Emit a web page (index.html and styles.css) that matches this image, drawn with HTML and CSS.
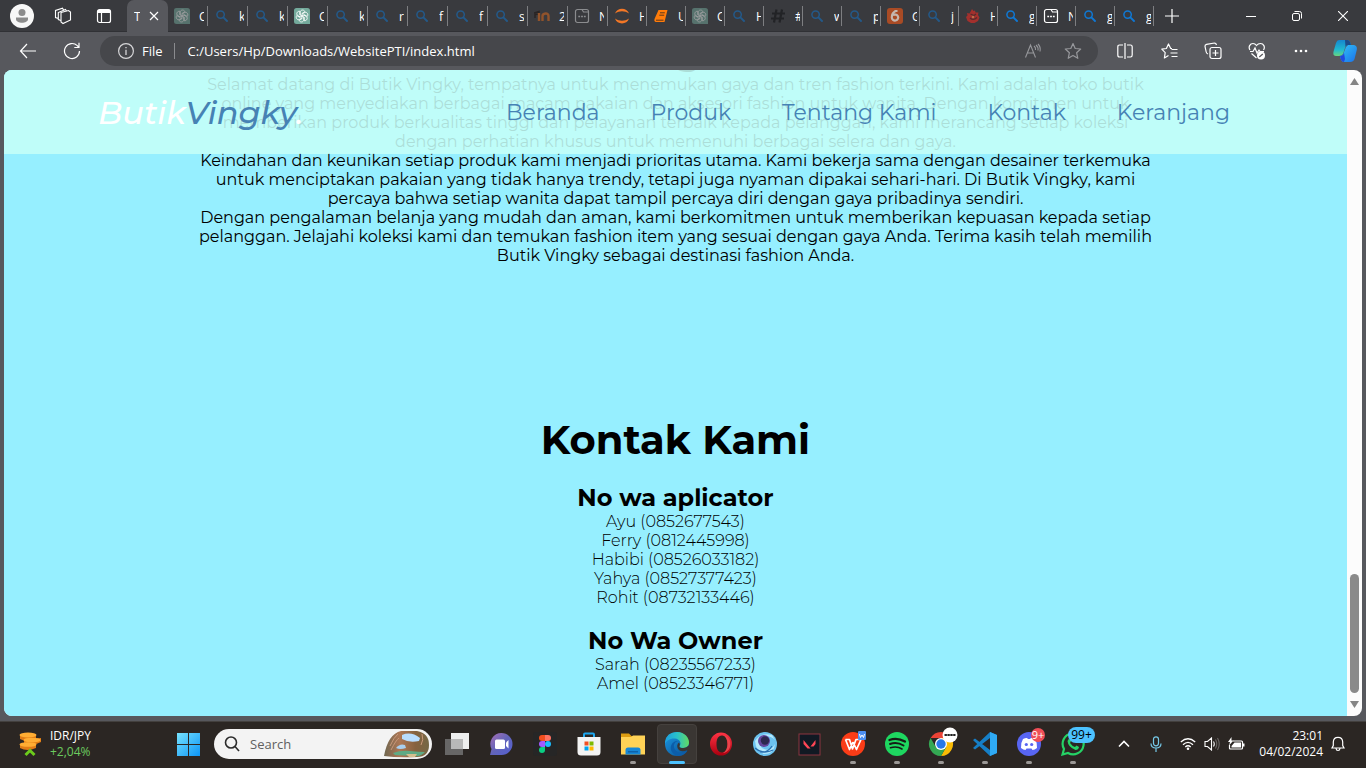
FILE: index.html
```html
<!DOCTYPE html>
<html lang="id">
<head>
<meta charset="utf-8">
<title>Toko Butik Vingky</title>
<link rel="stylesheet" href="styles.css">
</head>
<body>
<svg class="sprite" aria-hidden="true">
  <symbol id="mag" viewBox="0 0 16 16"><circle cx="6.600" cy="6.600" r="3.700" fill="none" stroke="currentColor" stroke-width="1.500"/><path d="M9.400 9.400L13 13" stroke="currentColor" stroke-width="1.900" stroke-linecap="round"/></symbol>
  <symbol id="gpt" viewBox="0 0 16 16"><path d="M2.500 0H13.500A2.500 2.500 0 0 1 16 2.500V16H2.500A2.500 2.500 0 0 1 0 13.500V2.500A2.500 2.500 0 0 1 2.500 0Z" fill="#74aa9c"/><g fill="none" stroke="#fff" stroke-width=".8"><path id="petal" d="M6.300 7V4.300C6.300 1.500 10 1.300 11 3.700L8 5.400V8"/><use href="#petal" transform="rotate(60 8 8)"/><use href="#petal" transform="rotate(120 8 8)"/><use href="#petal" transform="rotate(180 8 8)"/><use href="#petal" transform="rotate(240 8 8)"/><use href="#petal" transform="rotate(300 8 8)"/></g></symbol>
  <symbol id="win" viewBox="0 0 16 16"><path d="M3.500 1.500H8L9.500 4H14.500V12.500A2 2 0 0 1 12.500 14.500H3.500A2 2 0 0 1 1.500 12.500V3.500A2 2 0 0 1 3.500 1.500ZM8 1.500H12.500A2 2 0 0 1 14.500 3.500V4.500" fill="none" stroke="currentColor" stroke-width="1.200"/><path d="M4.300 8.500h1.800M7.100 8.500h1.800M9.900 8.500h1.800" stroke="currentColor" stroke-width="1.700"/></symbol>
</svg>

<header class="titlebar">
  <button class="tool" aria-label="Profil"><svg width="24" height="24" viewBox="0 0 24 24"><circle cx="12" cy="12" r="12" fill="#f7f7f7"/><circle cx="12" cy="8.500" r="3.500" fill="#8b8b8b"/><path d="M6 13.500h12v1.500c0 5-12 5-12 0z" fill="#8b8b8b"/></svg></button>
  <button class="tool" aria-label="Ruang kerja"><svg width="18" height="18" viewBox="0 0 18 18" fill="none" stroke="#fff" stroke-width="1.100"><path d="M7 5.500L14.500 3.500 16.500 5V13L9 16.500 7 15z"/><path d="M7 13.500L4.300 12.500V5.500L11.500 2.500 12.500 4M4.300 11.500L1.500 10.500V3.500L8.500 1.200 9.500 3"/></svg></button>
  <button class="tool" aria-label="Menu tab"><svg width="16" height="16" viewBox="0 0 16 16" fill="none" stroke="#fff" stroke-width="1.200"><rect x="1.500" y="1.500" width="13" height="13" rx="2"/><path d="M5.500 4.500V14"/><path d="M2 3.500h12" stroke-width="3"/></svg></button>
  <nav class="tabs" aria-label="Tab">
    <div class="tab active"><span class="name">T</span><button class="close" aria-label="Tutup tab"><svg width="10" height="10" viewBox="0 0 10 10"><path d="M1 1L9 9M9 1L1 9" stroke="#fff" stroke-width="1.200"/></svg></button></div>
    <div class="tab dim"><svg><use href="#gpt"/></svg><span class="name">C</span></div>
    <div class="tab dim"><svg><use href="#mag"/></svg><span class="name">k</span></div>
    <div class="tab dim"><svg><use href="#mag"/></svg><span class="name">k</span></div>
    <div class="tab"><svg><use href="#gpt"/></svg><span class="name">C</span></div>
    <div class="tab dim"><svg><use href="#mag"/></svg><span class="name">k</span></div>
    <div class="tab dim"><svg><use href="#mag"/></svg><span class="name">r</span></div>
    <div class="tab dim"><svg><use href="#mag"/></svg><span class="name">f</span></div>
    <div class="tab dim"><svg><use href="#mag"/></svg><span class="name">f</span></div>
    <div class="tab dim"><svg><use href="#mag"/></svg><span class="name">s</span></div>
    <div class="tab"><svg viewBox="0 0 16 16"><path d="M0 5L5 3.500V6L1 6.500V10" fill="none" stroke="#292424" stroke-width="1.500"/><path d="M5 5V13M8.500 13V8C8.500 5.500 14.500 4 14.500 8V13" fill="none" stroke="#91532b" stroke-width="2.400"/></svg><span class="name">2</span></div>
    <div class="tab faded"><svg><use href="#win"/></svg><span class="name">N</span></div>
    <div class="tab slim"><svg viewBox="0 0 16 16"><path d="M1 5.500C3-1 13-1 15 5.500 10.500 2.500 5.500 2.500 1 5.500ZM1 10.500C3 17 13 17 15 10.500 10.500 13.500 5.500 13.500 1 10.500Z" fill="#f37726"/></svg><span class="name">H</span></div>
    <div class="tab slim"><svg viewBox="0 0 16 16"><path d="M5.500 2H14.500L11.500 14H3Q.8 13.500 1.500 11Z" fill="#ff7c0a"/><path d="M7 4.800H11.800M6.300 7.200H11.200M3 12.200H10.500" fill="none" stroke="#4a3020" stroke-width=".9"/></svg><span class="name">U</span></div>
    <div class="tab slim dim"><svg><use href="#gpt"/></svg><span class="name">C</span></div>
    <div class="tab slim dim"><svg><use href="#mag"/></svg><span class="name">H</span></div>
    <div class="tab slim"><svg viewBox="0 0 16 16"><path d="M6.500 1.500L4 14.500M12 1.500L9.500 14.500M2 5.500H15M1 10.500H14" stroke="#222326" stroke-width="2.200"/></svg><span class="name">#</span></div>
    <div class="tab slim dim"><svg><use href="#mag"/></svg><span class="name">w</span></div>
    <div class="tab slim dim"><svg><use href="#mag"/></svg><span class="name">p</span></div>
    <div class="tab slim"><svg viewBox="0 0 16 16"><rect width="16" height="16" rx="3" fill="#a94b25"/><path d="M10.500 3H8.500C5 5 4.800 7.500 4.800 9.500A3.200 3 0 1 0 6 7.200" fill="none" stroke="#c4b7b0" stroke-width="2.200"/></svg><span class="name">G</span></div>
    <div class="tab slim dim"><svg><use href="#mag"/></svg><span class="name">j</span></div>
    <div class="tab slim"><svg viewBox="0 0 16 16"><path d="M7 1L8.500 3 10 2.500 10.500 4.500 13.500 4.500 13 7 14.500 9.500 13 13 9.500 15H6L2.500 13 1 9 2.500 7.500 2 5 4.500 5.500Z" fill="#a3302d"/><path d="M5.500 6L9 7.500 11 6M5 10Q8.500 13 12 9.500" fill="none" stroke="#542c2d" stroke-width="1.200"/><circle cx="8" cy="9" r="1.200" fill="#bd704b"/></svg><span class="name">H</span></div>
    <div class="tab slim"><svg><use href="#mag"/></svg><span class="name">g</span></div>
    <div class="tab slim white"><svg><use href="#win"/></svg><span class="name">N</span></div>
    <div class="tab slim"><svg><use href="#mag"/></svg><span class="name">g</span></div>
    <div class="tab slim"><svg><use href="#mag"/></svg><span class="name">g</span></div>
    <button class="newtab" aria-label="Tab baru"><svg width="14" height="14" viewBox="0 0 14 14"><path d="M7 0V14M0 7H14" stroke="#fff" stroke-width="1.200"/></svg></button>
  </nav>
  <div class="controls">
    <button aria-label="Kecilkan"><svg width="10" height="10" viewBox="0 0 10 10"><path d="M0 5.500H10" stroke="#fff"/></svg></button>
    <button aria-label="Pulihkan"><svg width="10" height="10" viewBox="0 0 10 10" fill="none" stroke="#fff"><rect x=".5" y="2.500" width="7" height="7" rx="1.500"/><path d="M2.500 .5H7.500Q9.500 .5 9.500 2.500V7.500"/></svg></button>
    <button aria-label="Tutup"><svg width="10" height="10" viewBox="0 0 10 10"><path d="M0 0L10 10M10 0L0 10" stroke="#fff" stroke-width="1.100"/></svg></button>
  </div>
</header>

<div class="toolbar">
  <button class="nav-btn" aria-label="Kembali"><svg width="18" height="16" viewBox="0 0 18 16" fill="none" stroke="#fff" stroke-width="1.200"><path d="M17 8H1.500M8 1L1.500 8 8 15"/></svg></button>
  <button class="nav-btn" aria-label="Muat ulang"><svg width="18" height="18" viewBox="0 0 18 18" fill="none" stroke="#fff" stroke-width="1.200"><path d="M16.500 9A7.500 7.500 0 1 1 14.300 3.700L15.500 5M16 .8V5.500H11.300"/></svg></button>
  <div class="address">
    <svg width="18" height="18" viewBox="0 0 18 18"><circle cx="9" cy="9" r="7.400" fill="none" stroke="#d6d6d8" stroke-width="1.200"/><path d="M9 7.700V13M9 5V6.300" stroke="#d6d6d8" stroke-width="1.300"/></svg>
    <label for="url">File</label>
    <input id="url" type="text" value="C:/Users/Hp/Downloads/WebsitePTI/index.html">
    <button aria-label="Baca keras"><svg width="18" height="16" viewBox="0 0 18 16" fill="none" stroke="#96979b" stroke-width="1.100"><path d="M1.500 14.500L6.500 2 11.500 14.500M3.300 10H9.700M10 3Q12 4.500 11.500 7M12 2Q14.500 4 14 7.500M14 1Q17 4 16 8.500"/></svg></button>
    <button aria-label="Favorit"><svg width="18" height="18" viewBox="0 0 18 18" fill="none" stroke="#96979b" stroke-width="1.200" stroke-linejoin="round"><path d="M9 1.500L11.200 6.500 16.700 7 12.600 10.700 13.800 16.300 9 13.400 4.200 16.300 5.400 10.700 1.300 7 6.800 6.500Z"/></svg></button>
  </div>
  <div class="actions">
    <button aria-label="Layar terpisah"><svg width="16" height="16" viewBox="0 0 16 16" fill="none" stroke="#fff" stroke-width="1.200"><path d="M8 0V16M6 2H2.500Q.8 2 .8 4V12Q.8 14 2.500 14H6M10 2H13.500Q15.200 2 15.200 4V12Q15.200 14 13.500 14H10"/></svg></button>
    <button aria-label="Daftar favorit"><svg width="17" height="17" viewBox="0 0 17 17" fill="none" stroke="#fff" stroke-width="1.200" stroke-linejoin="round"><path d="M11 5.500H9.700L7.500 1 5.400 5.500 .8 6.200 4.200 9.600 3.400 15 7.500 12.600M10.500 6.500H16.500M9.500 10H16.500M10.500 13.500H16.500"/></svg></button>
    <button aria-label="Koleksi"><svg width="18" height="18" viewBox="0 0 18 18" fill="none" stroke="#fff" stroke-width="1.200"><rect x="6" y="5.500" width="11" height="11" rx="2"/><path d="M11.500 8V14M8.500 11H14.500M4 12Q2.500 11.500 2.200 10L1 4.500Q.8 2.700 2.500 2.300L10.500 1Q12 1 12.500 3"/></svg></button>
    <button aria-label="Kinerja browser"><svg width="18" height="18" viewBox="0 0 18 18" fill="none" stroke="#fff" stroke-width="1.200"><path d="M2 8C0 5 2 1.500 5 1.500 7 1.500 8.500 3.500 8.500 3.500S10 1.500 12.500 1.500C15.500 1.500 17.500 5 15.500 8M2 9.500H5L7 6 9 11 11 8 12 9.500H16M3.500 11.500L8.500 16"/><circle cx="13" cy="13.500" r="4" fill="#fff" stroke="none"/><path d="M11.300 15L14.800 12" stroke="#55565a"/></svg></button>
    <button aria-label="Lainnya"><svg width="14" height="4" viewBox="0 0 14 4"><g fill="#fff"><circle cx="2" cy="2" r="1.300"/><circle cx="7" cy="2" r="1.300"/><circle cx="12" cy="2" r="1.300"/></g></svg></button>
    <button aria-label="Copilot"><svg width="24" height="24" viewBox="0 0 24 24"><defs><linearGradient id="cpa" x2="0" y2="1"><stop stop-color="#1686ce"/><stop offset=".6" stop-color="#20b8cf"/><stop offset="1" stop-color="#67d680"/></linearGradient><linearGradient id="cpb" x2="1" y2="1"><stop stop-color="#32c4f5"/><stop offset="1" stop-color="#1b71eb"/></linearGradient></defs><path d="M6 1H14Q17 1 18 6H15Q13 6 12 9L10 15Q9 17 6 17H3Q-1 17 1 11L3 4Q4 1 6 1Z" fill="url(#cpa)"/><path d="M15 6H21Q25 7 23.500 12L21.500 20Q20.500 23 17 23H11Q8 23 7 17Q10 17 11 13L13 8Z" fill="url(#cpb)"/><path d="M12 1H14Q17 1 18 6H15Q13.500 6 12.500 8Z" fill="#1e4b88"/><path d="M7 17Q10 17 11 14L12 20 11 23Q8 23 7 17Z" fill="#2249dd"/></svg></button>
  </div>
</div>

<div class="frame">
  <main class="page">
    <nav class="site-nav">
      <a class="logo" href="#beranda">Butik<span>Vingky</span>.</a>
      <div class="links">
        <a href="#beranda">Beranda</a>
        <a href="#produk">Produk</a>
        <a href="#tentang">Tentang Kami</a>
        <a href="#kontak">Kontak</a>
        <a href="#keranjang">Keranjang</a>
      </div>
    </nav>
    <div class="content">
      <section id="tentang" class="about">
        <h2>Tentang Kami</h2>
        <p>Selamat datang di Butik Vingky, tempatnya untuk menemukan gaya dan tren fashion terkini. Kami adalah toko butik<br>online yang menyediakan berbagai macam pakaian dan aksesori fashion untuk wanita. Dengan komitmen untuk<br>memberikan produk berkualitas tinggi dan pelayanan terbaik kepada pelanggan, kami merancang setiap koleksi<br>dengan perhatian khusus untuk memenuhi berbagai selera dan gaya.</p>
        <p>Keindahan dan keunikan setiap produk kami menjadi prioritas utama. Kami bekerja sama dengan desainer terkemuka<br>untuk menciptakan pakaian yang tidak hanya trendy, tetapi juga nyaman dipakai sehari-hari. Di Butik Vingky, kami<br>percaya bahwa setiap wanita dapat tampil percaya diri dengan gaya pribadinya sendiri.</p>
        <p>Dengan pengalaman belanja yang mudah dan aman, kami berkomitmen untuk memberikan kepuasan kepada setiap<br>pelanggan. Jelajahi koleksi kami dan temukan fashion item yang sesuai dengan gaya Anda. Terima kasih telah memilih<br>Butik Vingky sebagai destinasi fashion Anda.</p>
      </section>
      <section id="kontak" class="contact">
        <h2>Kontak Kami</h2>
        <h3>No wa aplicator</h3>
        <ul>
          <li>Ayu (0852677543)</li>
          <li>Ferry (0812445998)</li>
          <li>Habibi (08526033182)</li>
          <li>Yahya (08527377423)</li>
          <li>Rohit (08732133446)</li>
        </ul>
        <h3>No Wa Owner</h3>
        <ul>
          <li>Sarah (08235567233)</li>
          <li>Amel (08523346771)</li>
        </ul>
      </section>
    </div>
  </main>
  <div class="scrollbar">
    <svg width="9" height="7" viewBox="0 0 9 7"><path d="M4.500 0L9 7H0Z" fill="#858585"/></svg>
    <div class="track"><div class="thumb"></div></div>
    <svg width="9" height="7" viewBox="0 0 9 7"><path d="M4.500 7L9 0H0Z" fill="#858585"/></svg>
  </div>
</div>

<footer class="taskbar">
  <button class="widget">
    <svg width="24" height="26" viewBox="0 0 24 26"><g fill="#e07c16"><path d="M2 4V8Q9 12 18 8V4ZM6 9V13Q14 16 23 11V7ZM2 14V17Q9 21 18 17V12Z"/></g><g fill="#ffad33"><ellipse cx="10" cy="4" rx="8.500" ry="2.500"/><ellipse cx="14" cy="9" rx="8.500" ry="2.300"/><ellipse cx="10" cy="13.500" rx="8.500" ry="2.300"/></g><path d="M7.500 24L12 19.500 16.500 24" fill="none" stroke="#6ccb1c" stroke-width="3"/></svg>
    <span class="rate"><span>IDR/JPY</span><span class="up">+2,04%</span></span>
  </button>
  <button class="app start" aria-label="Mulai"><svg width="24" height="24" viewBox="0 0 24 24"><defs><linearGradient id="wg" gradientUnits="userSpaceOnUse" x2="24" y2="24"><stop stop-color="#7be6ff"/><stop offset="1" stop-color="#0c94f5"/></linearGradient></defs><path d="M1 1H12V12H1ZM13 1H24V12H13ZM1 13H12V24H1ZM13 13H24V24H13Z" fill="url(#wg)"/></svg></button>
  <div class="search">
    <svg width="16" height="16" viewBox="0 0 16 16" fill="none" stroke="#2b2b2b" stroke-width="1.600"><circle cx="7" cy="6.500" r="5.500"/><path d="M11 10.500L15 15"/></svg>
    <input type="search" placeholder="Search" aria-label="Search">
    <svg width="47" height="28" viewBox="0 0 47 28"><defs><linearGradient id="rk"><stop stop-color="#6e6650"/><stop offset=".35" stop-color="#ad7755"/><stop offset=".7" stop-color="#86623f"/><stop offset="1" stop-color="#746845"/></linearGradient></defs><path d="M1 26Q5 4 18 1H34Q46 3 46 15T34 27Q15 28 1 26Z" fill="url(#rk)"/><path d="M19 5Q28 1 37 8L36 11Q26 13 19 9Z" fill="#b8ddff"/><path d="M13 18Q17 13 22 15L23 18Q17 20 13 18Z" fill="#a9cfee"/><path d="M10 23Q18 20 27 21T42 22Q38 27 31 26L12 25Z" fill="#5faa85"/><path d="M23 24H34L32 27H26Z" fill="#d4be8e"/><path d="M7 16Q11 7 15 4M38 15Q41 10 39 4M8 20Q13 10 16 8" fill="none" stroke="#c9987a" stroke-width="1"/></svg>
  </div>
  <div class="apps">
    <button class="app" aria-label="Tampilan tugas"><svg width="24" height="24" viewBox="0 0 24 24"><path d="M6 1H24V17H6Z" fill="#eee"/><path d="M0 7H18V23H0Z" fill="#777" opacity=".8"/><path d="M6 7H18V17H6Z" fill="#b8b8b8"/></svg></button>
    <button class="app" aria-label="Chat"><svg width="24" height="24" viewBox="0 0 24 24"><defs><linearGradient id="ch" x2="1" y2="1"><stop stop-color="#a76fb5"/><stop offset=".5" stop-color="#6264b9"/><stop offset="1" stop-color="#5360d5"/></linearGradient></defs><path d="M12.500 1A11 11 0 1 1 12.500 23H1L2.500 17A11 11 0 0 1 12.500 1Z" fill="url(#ch)"/><rect x="6" y="7.500" width="10" height="9.500" rx="1.500" fill="#fff"/><path d="M17 10.500L19.500 8V16.500L17 14Z" fill="#fff"/></svg></button>
    <button class="app" aria-label="Figma"><svg width="24" height="24" viewBox="0 0 24 24"><rect width="24" height="24" rx="3" fill="#262626"/><path d="M12 3H9A3 3 0 0 0 9 9H12Z" fill="#f24e1e"/><path d="M12 3H15A3 3 0 0 1 15 9H12Z" fill="#ff7262"/><path d="M12 9H9A3 3 0 0 0 9 15H12Z" fill="#a259ff"/><circle cx="15" cy="12" r="3" fill="#1abcfe"/><path d="M12 15H9A3 3 0 1 0 12 18Z" fill="#0acf83"/></svg></button>
    <button class="app" aria-label="Microsoft Store"><svg width="24" height="24" viewBox="0 0 24 24"><path d="M7 7V2.500Q7 1.500 8 1.500H16Q17 1.500 17 2.500V7" fill="none" stroke="#1ea7ef" stroke-width="2"/><path d="M.5 5H23.500V20Q23.500 23.500 20 23.500H4Q.5 23.500 .5 20Z" fill="#f3f3f3"/><path d="M7.500 9.500H11.500V13.500H7.500Z" fill="#f25022"/><path d="M12.500 9.500H16.500V13.500H12.500Z" fill="#7fba00"/><path d="M7.500 14.500H11.500V18.500H7.500Z" fill="#00a4ef"/><path d="M12.500 14.500H16.500V18.500H12.500Z" fill="#ffb900"/></svg></button>
    <button class="app running" aria-label="File Explorer"><svg width="24" height="24" viewBox="0 0 24 24"><path d="M0 1.500H8L10.500 4H20V10H0Z" fill="#dd9d12"/><path d="M0 5H10L12 3.500H24V22.500H0Z" fill="#ffd256"/><path d="M4.500 22.500V18Q4.500 15.500 7 15.500H17Q19.500 15.500 19.500 18V22.500Z" fill="#1687d6"/><path d="M7 19H17V20.500H7Z" fill="#0d61a8"/></svg></button>
    <button class="app current" aria-label="Microsoft Edge"><svg width="24" height="24" viewBox="0 0 24 24"><defs><linearGradient id="ea"><stop stop-color="#1d9ee0"/><stop offset=".5" stop-color="#29c1c8"/><stop offset="1" stop-color="#62db62"/></linearGradient><linearGradient id="eb" x2="1" y2="1"><stop stop-color="#1c9ae5"/><stop offset="1" stop-color="#084d91"/></linearGradient></defs><circle cx="12" cy="12" r="12" fill="url(#eb)"/><path d="M0 10Q1.500 0 12 0C20 0 24 6 24 10.500 24 14.500 21 16 18 16 15 16 14 15 14.500 14 17 11 14.500 7 10 6.500 5 6 1 9 0 12Z" fill="url(#ea)"/><path d="M13 9C8 10 7 17 13 20 17 22 20 20 22.500 18.500 20 23 16 24 13 24 7 22 5 18 6 14 7 11 9 9 13 9Z" fill="#0c5da9"/><path d="M14.500 14Q14 16 18 16 21 16 24 13.500V18H22.500Q16 21 13 17 11 13 14 10.500 15.500 12 14.500 14Z" fill="#3a3633"/></svg></button>
    <button class="app" aria-label="Opera"><svg width="24" height="24" viewBox="0 0 24 24"><defs><linearGradient id="op" x2="0" y2="1"><stop stop-color="#ff3344"/><stop offset="1" stop-color="#a9000f"/></linearGradient></defs><path fill-rule="evenodd" d="M12 .5A11 11.500 0 1 0 12 23.500A11 11.500 0 1 0 12 .5ZM13 3.500C17 3.500 18.500 7.500 18.500 12S17 20.500 13 20.500 7.500 16.500 7.500 12 9 3.500 13 3.500Z" fill="url(#op)"/><path d="M14 3C24 4 24 20 14 21C20 18 20 6 14 3Z" fill="#e9424a"/></svg></button>
    <button class="app" aria-label="Gaming"><svg width="24" height="24" viewBox="0 0 24 24"><circle cx="12" cy="12" r="12" fill="#6cc3f0"/><path d="M2 9Q8 0 19 3L22 8Q17 2 9 6 3 10 9 16 17 21 22 12 21 22 11 22 3 20 2 9Z" fill="#b5e9fc"/><circle cx="11" cy="9" r="6" fill="#64479d"/><circle cx="12" cy="8.500" r="4.200" fill="#2d2950"/><path d="M2 16Q10 23 20 18M7 20Q15 21 19 14" fill="none" stroke="#276eb0" stroke-width="1.200"/></svg></button>
    <button class="app" aria-label="Valorant"><svg width="24" height="24" viewBox="0 0 24 24"><rect x="2" y="2" width="21" height="21" fill="#111923" stroke="#8b3440"/><path d="M6.500 8L13.500 16.500H10.500L6.500 12ZM18.500 8V12L16.500 14.500H13.500Z" fill="#ff4655"/></svg></button>
    <button class="app running" aria-label="WPS Office"><svg width="26" height="26" viewBox="0 0 26 26"><circle cx="13" cy="13" r="12" fill="#fa3c17"/><path d="M5.500 8.500H9.500L12.500 18 16 8.500H21L16.500 18.500 13 11M5.500 8.500L9.500 18.500 13 11" fill="none" stroke="#fff" stroke-width="1.700" stroke-linejoin="round"/><rect x="18" y="0" width="8" height="9" rx="1" fill="#4d8ff1"/><path d="M19.500 3L20.500 6.500 22 4 23.500 6.500 24.500 3" fill="none" stroke="#fff"/></svg></button>
    <button class="app running" aria-label="Spotify"><svg width="24" height="24" viewBox="0 0 24 24"><circle cx="12" cy="12" r="12" fill="#1ed760"/><g fill="none" stroke="#161b16" stroke-linecap="round"><path d="M4.500 8Q12 5 20 9.500" stroke-width="2.300"/><path d="M5 12Q12 9.500 18.500 13.500" stroke-width="2"/><path d="M5.500 15.700Q12 13.700 17 17" stroke-width="1.600"/></g></svg></button>
    <button class="app running" aria-label="Chrome"><svg width="34" height="34" viewBox="0 0 34 34"><path d="M6.600 11A12 12 0 0 1 27.400 11H17Z" fill="#ea4335"/><path d="M27.400 11A12 12 0 0 1 17 29L22.200 20 17 11Z" fill="#fbbc05"/><path d="M17 29A12 12 0 0 1 6.600 11L11.800 20H22.200Z" fill="#34a853"/><circle cx="17" cy="17" r="6" fill="#fff"/><circle cx="17" cy="17" r="4.700" fill="#2878e8"/><circle cx="26" cy="8" r="7.500" fill="#fff"/><path d="M20.500 8H31.500" stroke="#222" stroke-width="2" stroke-dasharray="2.400 .5"/></svg></button>
    <button class="app running" aria-label="Visual Studio Code"><svg width="24" height="24" viewBox="0 0 24 24"><path d="M17 0L24 3V21L17 24 1.500 9.500 0 8 2 6.500 17 18V6L2 17.500 0 16 17 0Z" fill="#167fc7"/><path d="M17 0L24 3V21L17 24Z" fill="#2faaf4"/></svg></button>
    <button class="app running" aria-label="Discord"><svg width="24" height="24" viewBox="0 0 24 24"><circle cx="12" cy="12" r="12" fill="#5865f2"/><path d="M6 7Q9 5.500 10 6L11 7H13L14 6Q15 5.500 18 7 20.500 11 20 16 17.500 18 15.500 18L14.500 16.500H9.500L8.500 18Q6.500 18 4 16 3.500 11 6 7Z" fill="#fff"/><circle cx="9.300" cy="12.500" r="1.600" fill="#5865f2"/><circle cx="14.700" cy="12.500" r="1.600" fill="#5865f2"/></svg><span class="badge red">9+</span></button>
    <button class="app running" aria-label="WhatsApp"><svg width="24" height="24" viewBox="0 0 24 24"><path d="M1.500 22.500L3 17A10.500 10.500 0 1 1 7 21Z" fill="none" stroke="#25d366" stroke-width="2.200"/><path d="M8 6.500L10 9 9 11Q11 14 14 15L15.500 13.500 18 15Q17.500 18 14.500 18 7 15 6.500 9Z" fill="#25d366"/></svg><span class="badge blue">99+</span></button>
  </div>
  <div class="tray">
    <button class="wide" aria-label="Ikon tersembunyi"><svg width="12" height="8" viewBox="0 0 12 8"><path d="M1 6.500L6 1.500 11 6.500" fill="none" stroke="#fff" stroke-width="1.600"/></svg></button>
    <button class="wide mic" aria-label="Mikrofon"><svg width="12" height="16" viewBox="0 0 12 16" fill="none" stroke="#76c9e8" stroke-width="1.200"><rect x="3.500" y=".8" width="5" height="9" rx="2.500"/><path d="M1 7.500Q1 12 6 12T11 7.500M6 12V16"/></svg></button>
    <button aria-label="Jaringan"><svg width="16" height="14" viewBox="0 0 16 14" fill="none" stroke="#fff" stroke-width="1.300"><path d="M.8 5Q8-1.500 15.200 5M3 7.700Q8 3 13 7.700M5.300 10Q8 7.500 10.700 10"/><circle cx="8" cy="11.800" r="1.300" fill="#fff" stroke="none"/></svg></button>
    <button aria-label="Volume"><svg width="16" height="14" viewBox="0 0 16 14" fill="none" stroke="#fff" stroke-width="1.100"><path d="M1 4.500H3.500L7.500 1V13L3.500 9.500H1ZM9.500 4.500Q11 7 9.500 9.500"/><path d="M11.500 2.500Q14 7 11.500 11.500M13.500 1Q17 7 13.500 13" stroke="#6b6866"/></svg></button>
    <button aria-label="Baterai"><svg width="17" height="14" viewBox="0 0 17 14"><path d="M5 4H13.500Q14.500 4 14.500 5V11Q14.500 12 13.500 12H2.500Q1.500 12 1.500 11V8" fill="none" stroke="#fff" stroke-width="1.200"/><path d="M6.500 5.500H13V10.500H3.500V9ZM15 6.500H16.500V9.500H15ZM3.500 0L0 5H2L1 8.500 5.500 3.500H3.500Z" fill="#fff"/></svg></button>
    <button class="clock"><span>23:01</span><span>04/02/2024</span></button>
    <button aria-label="Notifikasi"><svg width="14" height="16" viewBox="0 0 14 16" fill="none" stroke="#fff" stroke-width="1.200"><path d="M1 12H13L11.700 9.500V6Q11.500 1.300 7 1.300T2.300 6V9.500ZM5 12.500Q5.300 14.500 7 14.500T9 12.500"/></svg></button>
  </div>
</footer>
</body>
</html>
```
FILE: styles.css
```css
* { box-sizing: border-box; }

body {
  margin: 0;
  height: 100vh;
  display: flex;
  flex-direction: column;
  overflow: hidden;
  background: #57585d;
  color: #fff;
  font-family: "Open Sans", "Noto Sans", sans-serif;
  font-size: 12px;
}

button {
  display: flex;
  align-items: center;
  justify-content: center;
  padding: 0;
  border: 0;
  background: none;
  color: inherit;
  font: inherit;
}

svg { flex: none; display: block; }
a { color: inherit; text-decoration: none; }
input { min-width: 0; border: 0; outline: 0; padding: 0; background: none; font: inherit; color: inherit; }
.sprite { position: absolute; width: 0; height: 0; }

/* Browser title bar */
.titlebar {
  flex: none;
  display: flex;
  height: 32px;
  padding-left: 1px;
  background: #393a3e;
  box-shadow: inset 0 -1px #303135;
}
.tool { flex: none; width: 41px; }
.tabs { flex: 1; min-width: 0; display: flex; padding-left: 3px; overflow: hidden; }
.tab {
  flex: none;
  display: flex;
  align-items: center;
  gap: 9px;
  width: 40px;
  padding-left: 6px;
  background: linear-gradient(#7d7e81, #7d7e81) right center / 1px 20px no-repeat;
  color: #0f78d4;
}
.tab svg { width: 16px; height: 16px; }
.tab.slim { width: 39px; }
.tab.dim svg { opacity: .5; }
.tab.faded { color: #8b8c8f; }
.tab.white { color: #fff; }
.tab .name { width: 5px; overflow: hidden; color: #fff; white-space: nowrap; }
.tab.active {
  width: 41px;
  padding-left: 7px;
  border-radius: 7px 7px 0 0;
  background: #57585d;
}
.tab.active .name { width: 6px; }
.tab.active .close svg { width: 10px; height: 10px; }
.newtab { width: 36px; }
.controls { flex: none; display: flex; }
.controls button { width: 46px; }

/* Address row */
.toolbar { flex: none; display: flex; align-items: center; height: 38px; padding-left: 8px; }
.nav-btn { width: 40px; height: 30px; margin-right: 4px; }
.address {
  flex: 1;
  display: flex;
  align-items: center;
  height: 30px;
  margin: 0 5px 0 4px;
  padding: 0 5px 0 17px;
  border-radius: 15px;
  background: #46474b;
  font-size: 13px;
}
.address label { margin-left: 7px; padding-right: 11px; border-right: 1px solid #8a8b8e; line-height: 16px; }
.address input { flex: 1; padding-left: 13px; }
.address button { width: 40px; height: 30px; }
.actions { display: flex; margin-right: -1px; }
.actions button { width: 44px; height: 30px; }

/* Page viewport */
.frame {
  flex: 1;
  min-height: 0;
  display: flex;
  margin: 0 4px 5px;
  border-radius: 8px;
  overflow: hidden;
  background: #fcfcfc;
}
.page {
  position: relative;
  flex: 1;
  min-width: 0;
  display: flex;
  flex-direction: column;
  justify-content: flex-end;
  overflow: hidden;
  background: #96efff;
  color: #000;
  font-family: Montserrat, Inter, "Noto Sans", sans-serif;
}
.site-nav {
  position: absolute;
  inset: 0 0 auto;
  z-index: 1;
  display: flex;
  align-items: center;
  justify-content: space-between;
  height: 84px;
  padding: 0 117px 0 94px;
  background: rgba(197, 255, 248, .87);
  color: #4682b4;
}
.logo { color: #fff; font-size: 32px; font-style: italic; font-weight: 500; }
.logo span { color: #4682b4; }
.links { display: flex; gap: 51px; font-size: 22px; }
.content { flex: none; padding-bottom: 23px; text-align: center; font-size: 16px; font-weight: 400; line-height: 19px; }
.content p { margin: 0; white-space: nowrap; }
.content h2 { margin: 0 0 18px; font-size: 40px; font-weight: 700; line-height: 50px; }
.about { margin-bottom: 150px; }
.about h2 { margin: 0; }
.contact h3 { margin: 0; font-size: 24px; font-weight: 700; line-height: 29px; }
.contact ul { margin: 0; padding: 0; list-style: none; font-weight: 300; }
.contact ul + h3 { margin-top: 19px; }

.scrollbar { flex: none; width: 15px; display: flex; flex-direction: column; align-items: center; padding: 8px 0; }
.track { flex: 1; display: flex; flex-direction: column; justify-content: flex-end; padding-bottom: 8px; }
.thumb { width: 9px; height: 119px; border-radius: 5px; background: #8a8a8a; }

/* Windows taskbar */
.taskbar {
  flex: none;
  display: flex;
  align-items: center;
  height: 47px;
  padding-bottom: 2px;
  background: #2b2623;
  box-shadow: inset 0 1px #43403e;
}
.widget { flex: none; width: 166px; justify-content: flex-start; gap: 8px; padding-left: 18px; text-align: left; }
.rate { display: flex; flex-direction: column; line-height: 16px; }
.rate .up { color: #6ccb5f; }
.app { position: relative; flex: none; width: 44px; height: 40px; }
.search {
  flex: none;
  display: flex;
  align-items: center;
  width: 218px;
  height: 30px;
  margin: 0 3px 0 4px;
  padding: 0 2px 0 10px;
  border-radius: 15px;
  background: #f3f3f3;
}
.search input { flex: 1; padding-left: 10px; font-size: 13px; color: #333; }
.search input::placeholder { color: #606060; opacity: 1; }
.apps { display: flex; }
.running::after, .current::after {
  content: "";
  position: absolute;
  bottom: 0;
  width: 6px;
  height: 3px;
  border-radius: 2px;
  background: #9b9896;
}
.current::before {
  content: "";
  position: absolute;
  inset: 0 2px;
  z-index: -1;
  border: 1px solid #45413e;
  border-radius: 4px;
  background: #3a3633;
}
.app.current { z-index: 0; }
.current::after { width: 16px; background: #4cc2ff; }
.badge { position: absolute; border-radius: 8px; text-align: center; }
.badge.red { top: 4px; left: 24px; width: 14px; background: #f04e57; line-height: 14px; font-size: 11px; }
.badge.blue { top: 3px; left: 17px; width: 27px; background: #4cc2ff; color: #000; line-height: 16px; }

.tray { display: flex; align-items: center; margin-left: auto; padding-right: 16px; }
.tray button { width: 24px; height: 40px; }
.tray .wide { width: 32px; }
.tray .mic { margin-right: 4px; }
.tray .clock { flex-direction: column; align-items: flex-end; width: 75px; margin-right: 3px; line-height: 16px; }
```
